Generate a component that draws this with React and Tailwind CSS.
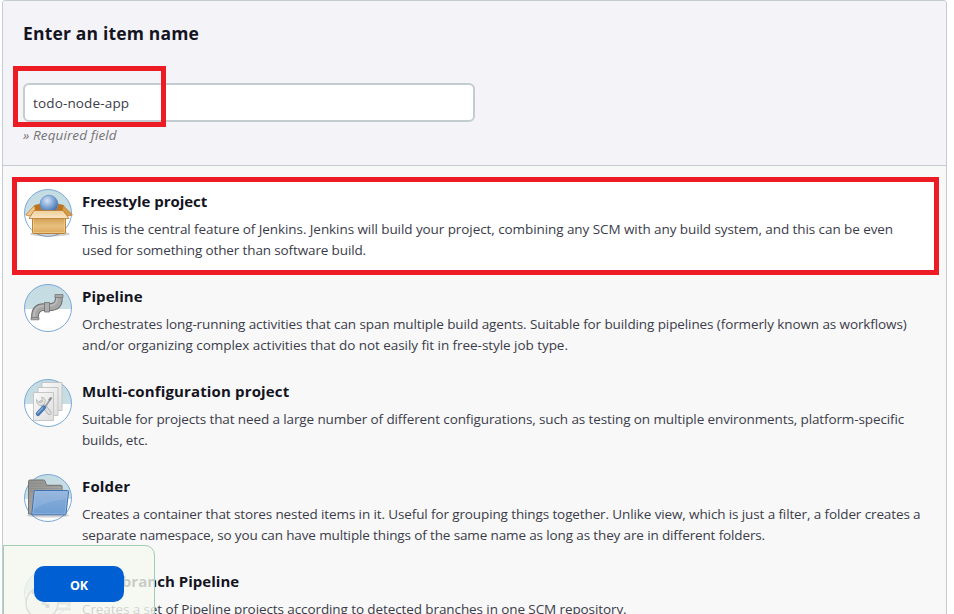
import React from "react";

function Disc({ id, children }) {
  return (
    <svg viewBox="0 0 48 48" className="h-12 w-12 shrink-0 overflow-visible">
      <defs>
        <clipPath id={`${id}-clip`}><circle cx="24" cy="24" r="23.5" /></clipPath>
        <linearGradient id={`${id}-sky`} x1="0" y1="0" x2="0" y2="1">
          <stop offset="0" stopColor="#c3dbe2" />
          <stop offset="1" stopColor="#c9dee5" />
        </linearGradient>
      </defs>
      <g clipPath={`url(#${id}-clip)`}>
        <rect width="48" height="48" fill="#fff" />
        <rect width="48" height="25" fill={`url(#${id}-sky)`} />
      </g>
      <circle cx="24" cy="24" r="23.5" fill="none" stroke="#7ba9d8" />
      {children}
    </svg>
  );
}

function BoxIcon() {
  return (
    <Disc id="box">
      <defs>
        <radialGradient id="ball" cx=".4" cy=".3" r=".7">
          <stop offset="0" stopColor="#d5e4f5" /><stop offset=".5" stopColor="#85a9d6" /><stop offset="1" stopColor="#3f6aa8" />
        </radialGradient>
        <linearGradient id="carton" x1="0" y1="0" x2="0" y2="1">
          <stop offset="0" stopColor="#cf9a4a" /><stop offset=".55" stopColor="#e9c080" /><stop offset="1" stopColor="#dba75a" />
        </linearGradient>
        <linearGradient id="flap" x1="0" y1="0" x2="0" y2="1">
          <stop offset="0" stopColor="#efcf9b" /><stop offset="1" stopColor="#fae6c6" />
        </linearGradient>
      </defs>
      <ellipse cx="26" cy="45" rx="20" ry="2.3" fill="#5f5f5f" opacity=".3" />
      <path d="M10.5 16.5 16 15h18l6 1.5-1 5H10z" fill="#b9741d" stroke="#b9792b" strokeWidth=".7" />
      <circle cx="25" cy="15.2" r="9" fill="url(#ball)" stroke="#668fc2" strokeWidth=".7" />
      <path d="M8.5 28h33v15.5q0 1-1 1h-31q-1 0-1-1z" fill="url(#carton)" stroke="#b47a2b" strokeWidth=".9" />
      <path d="M9.5 29h31v14.5h-31z" fill="none" stroke="#f8dca8" strokeWidth=".5" />
      <path d="M10.5 16.5 1.5 26l4.5 1 5.5-5z" fill="#edc78c" stroke="#b9792b" strokeWidth=".7" />
      <path d="M39 16.5 48.5 26l-4.5 1-5.5-5z" fill="#d69b45" stroke="#b9792b" strokeWidth=".7" />
      <path d="M10 21.5h29l6 8H5z" fill="url(#flap)" stroke="#b9792b" strokeWidth=".8" />
    </Disc>
  );
}

function PipeIcon() {
  return (
    <Disc id="pipe">
      <path d="M11 34.7V33q0-9.8 8.8-9.8H25q9.8 0 9.8-8.5V11.5" fill="none" stroke="#707070" strokeWidth="7.8" />
      <path d="M11 34.7V33q0-9.8 8.8-9.8H25q9.8 0 9.8-8.5V11.5" fill="none" stroke="#a6a6a6" strokeWidth="5.8" />
      <path d="M10 34V32q0-9.6 9.5-10.3H25q8.2 0 8.2-8" fill="none" stroke="#bcbcbc" strokeWidth="1.6" />
      <path d="M7 33.5h8v2.3H7zM31 10.5h8v3h-8z" fill="#a8a8a8" stroke="#707070" strokeWidth=".7" />
      <path d="M20.5 18.5h5v9.5h-5z" fill="#adadad" stroke="#6e6e6e" strokeWidth=".8" />
    </Disc>
  );
}

function SheetsIcon() {
  return (
    <Disc id="sheets">
      <defs>
        <linearGradient id="paper" x1="0" y1="0" x2="1" y2="1">
          <stop offset="0" stopColor="#fafafa" /><stop offset="1" stopColor="#dedede" />
        </linearGradient>
      </defs>
      <g fill="url(#paper)" stroke="#bfc1bf" strokeWidth=".9">
        <path d="M18 3.5h20v28H18z" />
        <path d="M14 8.5h20v28H14z" />
        <path d="M9.5 13.5h20v28h-20z" />
      </g>
      <path d="m17 23.5 8.5 10.3" stroke="#a8aaab" strokeWidth="4.2" strokeLinecap="round" />
      <path d="m17 23.5 8.5 10.3" stroke="#dedfdd" strokeWidth="2.8" strokeLinecap="round" />
      <path d="M12.5 20.5q-.2 5.3 4.3 6.2 4.5-.7 4.5-5.3-.6-2.9-3.6-3.3l.7 4.3-2.2 1.2-2.2-1z" fill="#e3e3df" stroke="#a8aaab" strokeWidth=".7" />
      <path d="m20.5 29 5.8-8.7" stroke="#9a9ea0" strokeWidth="1.8" />
      <path d="m14 34.8 5.8-6.3" stroke="#4778b3" strokeWidth="4.4" strokeLinecap="round" />
      <path d="m13.8 34 5-5.3" stroke="#86addb" strokeWidth="1.4" strokeLinecap="round" />
      <path d="m25 21.5 2.5-3" stroke="#8a8e90" strokeWidth="2.3" />
    </Disc>
  );
}

function FolderIcon() {
  return (
    <Disc id="folder">
      <defs>
        <linearGradient id="blue" x1="0" y1="0" x2="0" y2="1">
          <stop offset="0" stopColor="#8bb0dc" /><stop offset="1" stopColor="#6f9dd2" />
        </linearGradient>
        <linearGradient id="grey" x1="0" y1="0" x2="1" y2="1">
          <stop offset="0" stopColor="#91918f" /><stop offset="1" stopColor="#b4b4b2" />
        </linearGradient>
      </defs>
      <ellipse cx="24" cy="41.5" rx="21" ry="2" fill="#666" opacity=".3" />
      <path d="M4.5 40V7.5q0-1.5 1.5-1.5h13.5q1 0 1.5 1l1.5 4.3H37q1 0 1 1V40z" fill="url(#grey)" stroke="#737371" />
      <path d="M6 9.5h14M6 12h31M6 14.5h31M6 17h31" stroke="#72726f" strokeWidth=".6" opacity=".45" />
      <path d="M10.2 17.5q.1-1 1.1-1h32.2q1.2 0 1.1 1L42 40q-.1.8-1 .8H8.5q-.8 0-.7-.8z" fill="url(#blue)" stroke="#3f70b0" />
      <path d="M11.2 17.6h32.2L41 39.8H8.8z" fill="none" stroke="#a9c8e8" strokeWidth=".7" opacity=".7" />
      <path d="M11 18h32l-.8 7Q23 26.5 9.3 36z" fill="#fff" opacity=".1" />
    </Disc>
  );
}

function BranchIcon() {
  return (
    <Disc id="branch">
      <path d="M32 34h15M30 40h17M38 28l8 9" stroke="#aaa" strokeWidth="3" />
      <circle cx="18" cy="34" r="16" fill="#eee" stroke="#777" strokeWidth="1.4" />
      <path d="m10 22 14 16m-5-10v8" stroke="#999" strokeWidth="2.2" fill="none" />
      <circle cx="9.5" cy="23" r="2.2" fill="#777" /><circle cx="23.5" cy="37" r="2.2" fill="#777" />
    </Disc>
  );
}

const items = [
  { title: "Freestyle project", titleClass: "tracking-[-0.04px]", icon: BoxIcon, lines: [
    ["This is the central feature of Jenkins. Jenkins will build your project, combining any SCM with any build system, and this can be even", "tracking-[-0.077px]"],
    ["used for something other than software build.", "tracking-[-0.13px]"]] },
  { title: "Pipeline", titleClass: "tracking-[0.05px]", icon: PipeIcon, lines: [
    ["Orchestrates long-running activities that can span multiple build agents. Suitable for building pipelines (formerly known as workflows)", "tracking-[-0.1px]"],
    ["and/or organizing complex activities that do not easily fit in free-style job type.", "tracking-[-0.05px]"]] },
  { title: "Multi-configuration project", titleClass: "tracking-[0.15px]", icon: SheetsIcon, lines: [
    ["Suitable for projects that need a large number of different configurations, such as testing on multiple environments, platform-specific", "tracking-[-0.112px]"],
    ["builds, etc.", "tracking-[-0.15px]"]] },
  { title: "Folder", titleClass: "tracking-[0.15px]", icon: FolderIcon, lines: [
    ["Creates a container that stores nested items in it. Useful for grouping things together. Unlike view, which is just a filter, a folder creates a", "tracking-[-0.118px]"],
    ["separate namespace, so you can have multiple things of the same name as long as they are in different folders.", "tracking-[-0.132px]"]] },
  { title: "Multibranch Pipeline", titleClass: "tracking-[0.03px]", icon: BranchIcon, lines: [
    ["Creates a set of Pipeline projects according to detected branches in one SCM repository.", "tracking-[-0.095px]"]] },
];

function Item({ title, titleClass, icon: Icon, lines }) {
  return (
    <li className="flex h-[95px] gap-[10px] pl-[21px] pt-[12px]">
      <Icon />
      <div className="whitespace-nowrap">
        <h2 className={`h-[30px] w-fit text-[15px] font-bold leading-[25px] text-[#14141f] ${titleClass}`}>{title}</h2>
        {lines.map(([text, tracking]) => (
          <p key={text} className={`w-fit text-[13.5px] leading-[21px] text-[#3b3c49] ${tracking}`}>{text}</p>
        ))}
      </div>
    </li>
  );
}

export default function App() {
  return (
    <div className="relative h-[614px] w-[954px] overflow-hidden bg-white pl-[2px] font-['Open_Sans','Noto_Sans',sans-serif] text-[#14141f]">
      <main className="h-[640px] w-[945px] rounded-t-[3px] border border-[#c3ccd1] bg-[#f8f8f8]">
        <header className="h-[165px] rounded-t-[2px] border-b border-[#c3ccd1] bg-[#f3f3f8] pl-[20px] pt-[19px]">
          <h1 className="w-fit text-[17.5px] font-bold leading-[26px] tracking-[0.17px]">Enter an item name</h1>
          <div className="mt-[37px] flex h-[39px] w-[452px] items-center rounded-[6px] border-2 border-[#c3ccd1] bg-white pl-[8px] pt-[2px] text-[13.5px] text-[#3b3c49]">
            <span className="tracking-[0.15px]">todo-node-app</span>
          </div>
          <p className="mt-[3px] w-fit text-[13.5px] italic leading-[21px] tracking-[0.1px] text-[#737373]">» Required field</p>
        </header>
        <ul className="pt-[11px]">
          {items.map((item, i) => (
            <React.Fragment key={item.title}>
              {i === 0 ? (
                <div className="relative">
                  <div className="absolute left-[9px] top-0 h-[98px] w-[927px] border-[5px] border-[#ed1c24] bg-white" />
                  <div className="relative"><Item {...item} /></div>
                </div>
              ) : <Item {...item} />}
            </React.Fragment>
          ))}
        </ul>
      </main>
      <div className="absolute left-[13px] top-[66px] h-[61px] w-[153px] border-[5px] border-[#ed1c24]" />
      <div className="absolute left-[3px] top-[545px] h-[80px] w-[152px] rounded-tr-[10px] border border-[#a3ccb5] bg-[#f5f9f0]/80 pl-[30px] pt-[20px]">
        <button className="h-[36px] w-[90px] rounded-[10px] bg-[#0060d3] pt-[4px] text-[12.5px] font-bold text-white">OK</button>
      </div>
    </div>
  );
}
